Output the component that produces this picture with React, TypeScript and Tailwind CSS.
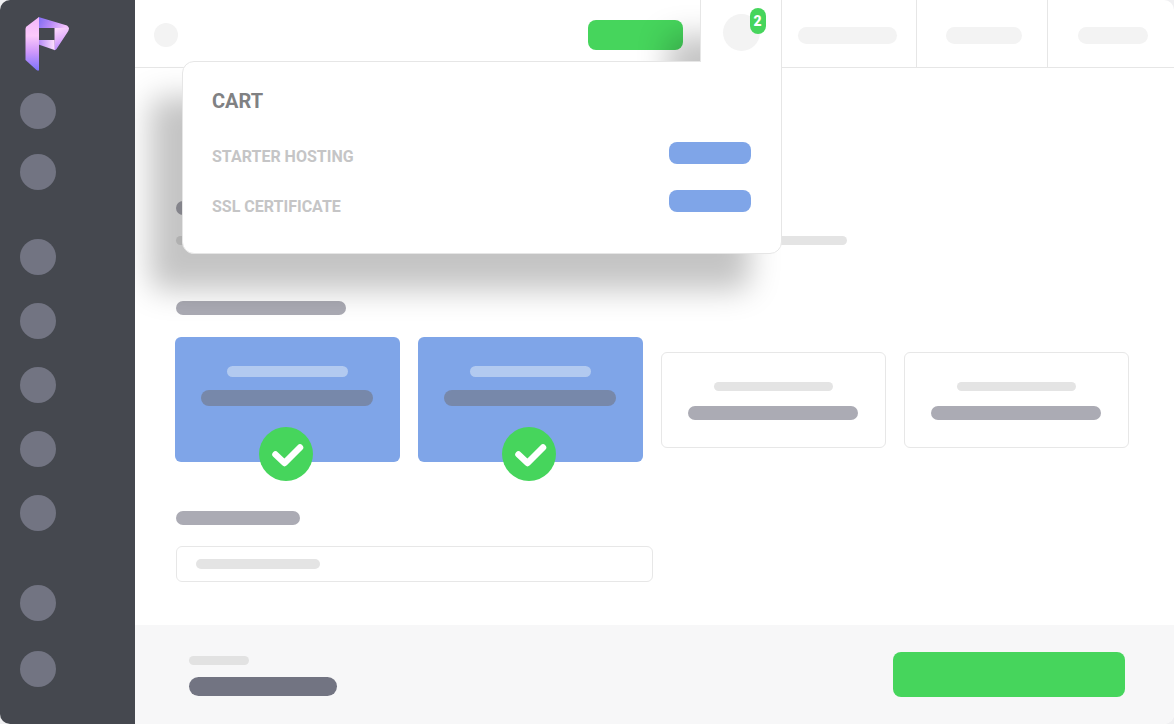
import React from "react";

const navGroups = [
  { ids: ["Home", "Services"], className: "mt-[21px] gap-[25px]" },
  { ids: ["Domains", "Hosting", "Email", "Security", "Billing"], className: "mt-[49px] gap-[28px]" },
  { ids: ["Support", "Account"], className: "mt-[54px] gap-[30px]" },
];

const cartItems = ["STARTER HOSTING", "SSL CERTIFICATE"];

const options = [
  { name: "Option 1", selected: true },
  { name: "Option 2", selected: true },
  { name: "Option 3", selected: false },
  { name: "Option 4", selected: false },
];

function Logo() {
  return (
    <svg width="46" height="56" viewBox="0 0 46 56" aria-hidden="true">
      <defs>
        <linearGradient id="stem" x1="0" y1="0" x2="0" y2="1">
          <stop offset="0" stopColor="#f3b6fb" />
          <stop offset="0.35" stopColor="#fbc9fb" />
          <stop offset="0.65" stopColor="#cf98fb" />
          <stop offset="1" stopColor="#7b72fd" />
        </linearGradient>
        <linearGradient id="arm" x1="0" y1="0" x2="1" y2="0.2">
          <stop offset="0" stopColor="#7d6cf4" />
          <stop offset="0.5" stopColor="#b98af7" />
          <stop offset="1" stopColor="#f3c3fc" />
        </linearGradient>
        <linearGradient id="side" x1="0.2" y1="0" x2="0.5" y2="1">
          <stop offset="0" stopColor="#fcd8fc" />
          <stop offset="0.5" stopColor="#e3b0fb" />
          <stop offset="1" stopColor="#b084fa" />
        </linearGradient>
        <linearGradient id="foot" x1="0" y1="0" x2="1" y2="0">
          <stop offset="0" stopColor="#b488f6" />
          <stop offset="1" stopColor="#ffe0fd" />
        </linearGradient>
      </defs>
      <path d="M14.500 1 L43 9.500 Q45.500 11 44.700 13 L30.500 12 L14.500 12 Z" fill="url(#arm)" />
      <path d="M30.500 12 L44.900 12 Q45 14 44 15.500 L32.500 33 Q31.500 34.500 30 34 L30.500 24 Z" fill="url(#side)" />
      <path d="M14.500 24 L30.500 24 L30.500 34 L14.500 28.500 Z" fill="url(#foot)" />
      <path d="M15 1 L2.500 10.500 Q1.500 11.500 1.500 13 L1.500 44 L12.500 54 Q14.500 55.500 15 54 Z" fill="url(#stem)" />
    </svg>
  );
}

function CheckBadge() {
  return (
    <span className="absolute -bottom-[19px] left-[calc(50%-29px)] flex size-[54px] rounded-full bg-[#46d55c]">
      <svg width="54" height="54" viewBox="0 0 54 54" fill="none" aria-hidden="true">
        <path
          d="M16.500 27.500 L25.500 36 L41 20.500"
          stroke="#fff"
          strokeWidth="6.500"
          strokeLinecap="round"
          strokeLinejoin="round"
        />
      </svg>
    </span>
  );
}

function OptionCard({ name, selected }: { name: string; selected: boolean }) {
  return selected ? (
    <button
      type="button"
      aria-label={name}
      aria-pressed="true"
      className="relative flex h-[125px] flex-col items-center rounded-md bg-[#7fa5e8] pt-[29px] pr-px"
    >
      <span className="h-[11px] w-[121px] rounded-full bg-[#b2caf0]" />
      <span className="mt-[13px] h-4 w-[172px] rounded-full bg-[#7788aa]" />
      <CheckBadge />
    </button>
  ) : (
    <button
      type="button"
      aria-label={name}
      aria-pressed="false"
      className="flex h-24 flex-col items-center rounded-md border border-[#e7e7e7] bg-white pt-[29px] pr-px"
    >
      <span className="h-[9px] w-[119px] rounded-full bg-[#e4e4e4]" />
      <span className="mt-[15px] h-[14px] w-[170px] rounded-full bg-[#ababb4]" />
    </button>
  );
}

function Sidebar() {
  return (
    <nav aria-label="Main" className="flex w-[135px] shrink-0 flex-col bg-[#45484f] pt-4 pl-5">
      <a href="#home" aria-label="Home page" className="ml-1">
        <Logo />
      </a>
      {navGroups.map((group, i) => (
        <div key={i} className={`flex flex-col ${group.className}`}>
          {group.ids.map((id) => (
            <a key={id} href={`#${id.toLowerCase()}`} aria-label={id} className="size-9 rounded-full bg-[#727482]" />
          ))}
        </div>
      ))}
    </nav>
  );
}

function Cart() {
  return (
    <div className="relative z-10 w-[82px] self-stretch drop-shadow-[-32px_36px_15px_rgba(0,0,0,0.23)]">
      <section
        aria-label="Cart"
        className="absolute top-[61px] right-0 w-[600px] rounded-xl rounded-tr-none border border-[#e6e6e6] bg-white pt-[27px] pr-[30px] pb-[34px] pl-[29px]"
      >
        <h2 className="text-[20px] leading-6 font-bold text-[#808183]">CART</h2>
        <div className="mt-[29px] flex justify-between">
          <ul className="flex flex-col gap-[26px] pt-[3px]">
            {cartItems.map((item) => (
              <li key={item} className="text-base leading-6 font-bold text-[#c5c5c6]">
                {item}
              </li>
            ))}
          </ul>
          <div className="flex flex-col gap-[26px]">
            {cartItems.map((item) => (
              <button key={item} type="button" aria-label={item} className="h-[22px] w-[82px] rounded-lg bg-[#7fa5e8]" />
            ))}
          </div>
        </div>
      </section>
      <div className="relative flex h-[62px] justify-center border-x border-[#e6e6e6] bg-white pt-[14px]">
        <button type="button" aria-label="Open cart" className="relative size-[37px] rounded-full bg-[#f3f3f3]">
          <span className="absolute -top-[6px] -right-[6px] flex h-[26px] w-4 items-center justify-center rounded-full bg-[#46d55c] text-sm leading-none font-black text-white">
            2
          </span>
        </button>
      </div>
    </div>
  );
}

function Header() {
  return (
    <header className="flex h-[68px] items-center border-b border-[#e6e6e6]">
      <button type="button" aria-label="Search" className="mt-[2px] ml-[19px] size-6 rounded-full bg-[#f3f3f3]" />
      <button type="button" aria-label="Upgrade" className="mt-[2px] mr-[17px] ml-auto h-[30px] w-[95px] rounded-lg bg-[#46d55c]" />
      <Cart />
      <a href="#support" aria-label="Support" className="flex w-[135px] items-center justify-center self-stretch border-r border-[#e6e6e6] pr-1">
        <span className="mt-1 h-[17px] w-[99px] rounded-full bg-[#f3f3f3]" />
      </a>
      <a href="#language" aria-label="Language" className="flex w-[131px] items-center justify-center self-stretch border-r border-[#e6e6e6] pl-1">
        <span className="mt-1 h-[17px] w-[76px] rounded-full bg-[#f3f3f3]" />
      </a>
      <a href="#account" aria-label="Account" className="flex w-[126px] items-center justify-center self-stretch pl-1">
        <span className="mt-1 h-[17px] w-[70px] rounded-full bg-[#f3f3f3]" />
      </a>
    </header>
  );
}

export default function App() {
  return (
    <div className="bg-[#f0f0f2] font-[Roboto,sans-serif]">
      <div className="flex min-h-screen overflow-hidden rounded-[10px] bg-white">
        <Sidebar />
        <div className="flex min-w-0 flex-1 flex-col overflow-hidden">
          <Header />
          <main className="flex-1 pt-[133px] pr-[45px] pb-[43px] pl-10">
            <div className="pl-px">
              <div className="h-[14px] w-[170px] rounded-full bg-[#ababb4]" />
              <div className="mt-[21px] h-[9px] w-[671px] rounded-full bg-[#e4e4e4]" />
              <div className="mt-14 h-[14px] w-[170px] rounded-full bg-[#ababb4]" />
            </div>
            <div className="mt-[22px] grid grid-cols-4 items-center gap-[18px]">
              {options.map((option) => (
                <OptionCard key={option.name} {...option} />
              ))}
            </div>
            <div className="mt-[49px] pl-px">
              <label htmlFor="domain" aria-label="Domain name" className="block h-[14px] w-[124px] rounded-full bg-[#ababb4]" />
              <div className="relative mt-[21px] w-1/2">
                <input
                  id="domain"
                  type="text"
                  className="block h-9 w-full rounded-md border border-[#e7e7e7] bg-white px-5 text-sm"
                />
                <span className="pointer-events-none absolute top-[13px] left-5 h-[10px] w-[124px] rounded-full bg-[#e4e4e4]" />
              </div>
            </div>
          </main>
          <footer className="flex items-center justify-between bg-[#f7f7f8] py-[27px] pr-[49px] pl-[54px]">
            <div className="flex flex-col gap-3 pt-[2px]">
              <div className="h-[9px] w-[60px] rounded-full bg-[#e2e2e2]" />
              <div className="h-[19px] w-[148px] rounded-full bg-[#727482]" />
            </div>
            <button type="button" aria-label="Continue" className="h-[45px] w-[232px] rounded-lg bg-[#46d55c]" />
          </footer>
        </div>
      </div>
    </div>
  );
}
